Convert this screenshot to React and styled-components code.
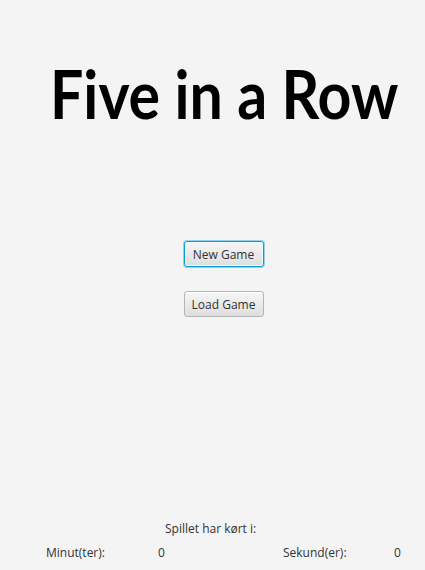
import { createGlobalStyle, styled } from "styled-components";

const GlobalStyle = createGlobalStyle`
  html, body {
    margin: 0;
    padding: 0;
    background: #f4f4f4;
  }
  body {
    font-family: "Open Sans", "Noto Sans", sans-serif;
  }
`;

const App = () => {
  return (
    <>
      <GlobalStyle />
      <Wrapper>
        <Title>Five in a Row</Title>

        <Menu>
          <MenuButton $focused>New Game</MenuButton>
          <MenuButton>Load Game</MenuButton>
        </Menu>

        {/* timer */}
        <Timer>
          <TimerLabel>Spillet har kørt i:</TimerLabel>
          <TimerRow>
            <span className="unit">Minut(ter):</span>
            <span className="value">0</span>
            <span className="unit sek">Sekund(er):</span>
            <span className="value last">0</span>
          </TimerRow>
        </Timer>
      </Wrapper>
    </>
  );
};

const Wrapper = styled.div`
  width: 425px;
  height: 570px;
  display: flex;
  flex-direction: column;
  color: #333;
  font-size: 12px;
  overflow: hidden;
`;

const Title = styled.h1`
  margin: 54px 0 0 50px;
  font-family: "Lato", sans-serif;
  font-weight: 700;
  font-size: 66px;
  line-height: 80px;
  color: #000;
  white-space: nowrap;
  transform: scaleX(0.895);
  transform-origin: left center;
`;

const Menu = styled.div`
  display: flex;
  flex-direction: column;
  align-items: center;
  gap: 24px;
  margin: 107px 0 0 22px;
`;

const MenuButton = styled.button`
  width: 80px;
  height: 26px;
  padding: 0;
  font-family: "Open Sans", sans-serif;
  font-size: 12px;
  color: #333;
  border-radius: 3px;
  border: 1px solid ${(p) => (p.$focused ? "#039ed3" : "#b5b5b5")};
  box-shadow: ${(p) =>
    p.$focused ? "0 0 0 1px #8fd3f0, inset 0 0 0 1px #fafafa" : "inset 0 1px 0 #fff"};
  background: linear-gradient(#f6f6f6, #dedede);
  cursor: pointer;
`;

const Timer = styled.div`
  margin-top: auto;
  padding-bottom: 6px;
  display: flex;
  flex-direction: column;
  font-size: 12px;
  color: #333;
`;

const TimerLabel = styled.div`
  padding-left: 165px;
  height: 26px;
  line-height: 26px;
`;

const TimerRow = styled.div`
  display: flex;
  height: 22px;
  line-height: 22px;
  padding-left: 46px;

  .unit {
    width: 112px;
  }
  .value {
    width: 125px;
  }
  .last {
    width: auto;
  }
  .sek {
    width: 111px;
  }
`;

export default App;
